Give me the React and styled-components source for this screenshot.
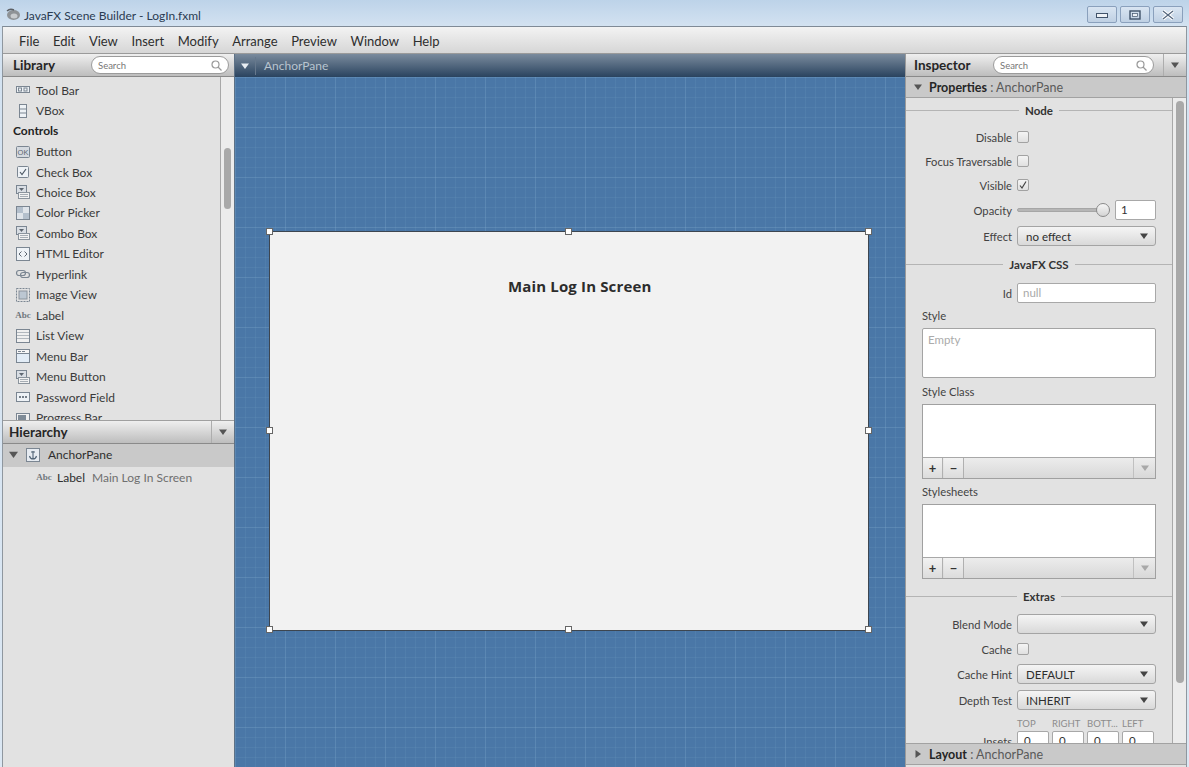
import styled, { createGlobalStyle } from "styled-components";

const GlobalStyle = createGlobalStyle`
  html, body {
    margin: 0;
    padding: 0;
    background: #dbe7f3;
    overflow: hidden;
  }
  body {
    font-family: Lato, "Open Sans", sans-serif;
    font-size: 12px;
    color: #333;
  }
`;

// Window chrome
const Page = styled.div`
  width: 1189px;
  height: 767px;
  display: flex;
  flex-direction: column;
  overflow: hidden;
  background: linear-gradient(180deg, #bdd3e9 0, #d3e2f1 26px, #dbe7f3 100%);
`;

const TitleBar = styled.div`
  height: 26px;
  flex: none;
  display: flex;
  align-items: flex-start;
  padding: 6px 6px 0 5px;
  box-sizing: border-box;
`;

const TitleLogo = styled.svg`
  width: 16px;
  height: 14px;
  margin-top: 2px;
  flex: none;
`;

const TitleText = styled.div`
  margin: 1px 0 0 3px;
  font-size: 12px;
  line-height: 18px;
  color: #2a3b52;
  flex: 1;
`;

const WinButton = styled.div`
  width: 30px;
  height: 17px;
  margin-left: 3px;
  box-sizing: border-box;
  border: 1px solid #8aa0bc;
  border-radius: 2px;
  background: linear-gradient(180deg, #d9e5f2, #bfd0e3);
  display: flex;
  align-items: center;
  justify-content: center;
`;

const Frame = styled.div`
  flex: 1;
  min-height: 0;
  margin: 0 2px;
  display: flex;
  flex-direction: column;
  border-top: 1px solid #7f8a96;
  border-left: 1px solid #8f979f;
  border-right: 1px solid #8f979f;
  box-sizing: border-box;
`;

const MenuBar = styled.div`
  height: 27px;
  flex: none;
  display: flex;
  align-items: center;
  gap: 13.6px;
  padding: 1px 0 0 16px;
  box-sizing: border-box;
  background: linear-gradient(180deg, #f3f3f3, #d6d6d6);
  border-bottom: 1px solid #9a9a9a;
`;

const MenuItem = styled.span`
  font-size: 13px;
  color: #2e2e2e;
`;

const Workspace = styled.div`
  flex: 1;
  min-height: 0;
  display: flex;
`;

// Shared panel parts
const PanelHeader = styled.div`
  height: 23px;
  flex: none;
  display: flex;
  align-items: center;
  box-sizing: border-box;
  background: linear-gradient(180deg, #efefef, #bdbdbd);
  border-bottom: 1px solid #8a8a8a;
`;

const PanelTitle = styled.div`
  font-size: 13.5px;
  font-weight: 700;
  color: #262626;
  width: ${(p) => p.$width}px;
  padding-left: ${(p) => p.$indent}px;
  box-sizing: border-box;
  flex: none;
`;

const SearchBox = styled.div`
  width: ${(p) => p.$width}px;
  height: 18px;
  flex: none;
  box-sizing: border-box;
  border: 1px solid #9b9b9b;
  border-radius: 9px;
  background: #fff;
  display: flex;
  align-items: center;
  justify-content: space-between;
  padding: 0 6px;
  font-size: 9.5px;
  color: #777;
`;

const MenuArrowCell = styled.div`
  width: 22px;
  height: 22px;
  margin-left: auto;
  flex: none;
  border-left: 1px solid #adadad;
  display: flex;
  align-items: center;
  justify-content: center;
`;

const ScrollTrack = styled.div`
  flex: none;
  width: ${(p) => p.$width}px;
  background: #ececec;
  border-left: 1px solid #a8a8a8;
  box-sizing: border-box;
  padding: ${(p) => p.$top}px ${(p) => p.$right}px 0 3px;
`;

const ScrollThumb = styled.div`
  height: ${(p) => p.$height}px;
  border-radius: 4px;
  background: #a9a9a9;
`;

// Left column
const LeftColumn = styled.div`
  width: 231px;
  flex: none;
  display: flex;
  flex-direction: column;
  background: #e2e2e2;
`;

const LibraryBody = styled.div`
  height: 344px;
  flex: none;
  display: flex;
  border-bottom: 1px solid #a0a0a0;
  box-sizing: border-box;
`;

const LibraryList = styled.div`
  flex: 1;
  overflow: hidden;
  padding: 3px 0 0 12px;
`;

const LibraryRow = styled.div`
  height: 20.46px;
  display: flex;
  align-items: center;
  gap: 5px;
  font-size: 12px;
  color: #3a3a3a;
`;

const LibraryGroup = styled.div`
  height: 20.46px;
  line-height: 20px;
  margin-left: -2px;
  font-weight: 700;
  font-size: 12px;
  color: #222;
`;

const IconSlot = styled.svg`
  width: 16px;
  height: 16px;
  flex: none;
`;

const HierarchyRoot = styled.div`
  height: 23px;
  display: flex;
  align-items: center;
  gap: 7px;
  padding: 0 0 2px 6px;
  box-sizing: border-box;
  background: #c9c9c9;
  font-size: 12px;
  color: #2e2e2e;
`;

const HierarchyChild = styled.div`
  height: 22px;
  display: flex;
  align-items: center;
  padding: 0 0 2px 33px;
  box-sizing: border-box;
  gap: 5px;
  font-size: 12px;
  color: #2e2e2e;
`;

const Muted = styled.span`
  color: #6f6f6f;
  margin-left: 2px;
`;

const AbcGlyph = styled.span`
  font-family: "Liberation Serif", serif;
  font-size: 9px;
  font-weight: 700;
  color: #70767c;
  width: 16px;
  flex: none;
  text-align: center;
`;

// Centre column
const CenterColumn = styled.div`
  width: 671px;
  flex: none;
  display: flex;
  flex-direction: column;
  border-left: 1px solid #5d7186;
  box-sizing: border-box;
`;

const PathBar = styled.div`
  height: 23px;
  flex: none;
  display: flex;
  align-items: center;
  background: linear-gradient(180deg, #7a8b9d, #2a435f);
  color: #b9c4cf;
  font-size: 12px;
`;

const PathArrow = styled.div`
  width: 20px;
  height: 18px;
  flex: none;
  margin-right: 8px;
  border-right: 1px solid #66788c;
  display: flex;
  align-items: center;
  justify-content: center;
`;

const Canvas = styled.div`
  flex: 1;
  min-height: 0;
  padding: 154px 0 0 34px;
  box-sizing: border-box;
  background-color: #4a77a7;
  background-image:
    linear-gradient(rgba(130, 170, 205, 0.2) 1px, transparent 1px),
    linear-gradient(90deg, rgba(130, 170, 205, 0.2) 1px, transparent 1px),
    linear-gradient(rgba(130, 170, 205, 0.13) 1px, transparent 1px),
    linear-gradient(90deg, rgba(130, 170, 205, 0.13) 1px, transparent 1px);
  background-size: 50px 50px, 50px 50px, 10px 10px, 10px 10px;
`;

const ContentPane = styled.div`
  position: relative;
  width: 600px;
  height: 400px;
  box-sizing: border-box;
  border: 1px solid #3d4650;
  background: #f2f2f2;
  padding: 43px 0 0 238px;
  font-family: "Open Sans", sans-serif;
  font-size: 15px;
  letter-spacing: 0.15px;
  line-height: 22px;
  font-weight: 700;
  color: #2c2c2c;
`;

const Handle = styled.div`
  position: absolute;
  left: ${(p) => p.$x};
  top: ${(p) => p.$y};
  width: 7px;
  height: 7px;
  margin: -4px 0 0 -4px;
  background: #fff;
  border: 1px solid #666;
  box-sizing: border-box;
`;

// Right column
const RightColumn = styled.div`
  flex: 1;
  min-width: 0;
  display: flex;
  flex-direction: column;
  background: #e2e2e2;
  border-left: 1px solid #9a9a9a;
  box-sizing: border-box;
`;

const AccordionBar = styled.div`
  height: ${(p) => (p.$top ? 22 : 21)}px;
  flex: none;
  display: flex;
  align-items: center;
  padding-left: 8px;
  gap: 7px;
  background: #c9c9c9;
  border-bottom: 1px solid #a2a2a2;
  border-top: ${(p) => (p.$top ? "1px solid #a2a2a2" : "none")};
  box-sizing: border-box;
  font-size: 12.5px;
  color: #5a5a5a;
`;

const AccordionName = styled.span`
  font-weight: 700;
  color: #262626;
`;

const FooterStrip = styled.div`
  height: 2px;
  flex: none;
`;

const InspectorBody = styled.div`
  flex: 1;
  min-height: 0;
  display: flex;
  overflow: hidden;
`;

const Form = styled.div`
  width: 266px;
  flex: none;
  overflow: hidden;
`;

const SectionTitle = styled.div`
  height: ${(p) => p.$height}px;
  margin-bottom: ${(p) => p.$after || 0}px;
  display: flex;
  align-items: center;
  gap: 6px;
  font-size: 11.5px;
  font-weight: 700;
  color: #333;
  &::before, &::after {
    content: "";
    flex: 1;
    height: 1px;
    background: #b4b4b4;
  }
`;

const Row = styled.div`
  height: ${(p) => p.$height}px;
  display: flex;
  align-items: center;
`;

const RowLabel = styled.div`
  width: 106px;
  flex: none;
  margin-right: 5px;
  text-align: right;
  font-size: 11.2px;
  color: #424242;
  white-space: nowrap;
`;

const CheckBox = styled.div`
  width: 12px;
  height: 12px;
  box-sizing: border-box;
  border: 1px solid #a2a2a2;
  border-radius: 2px;
  background: linear-gradient(180deg, #f4f4f4, #e0e0e0);
  display: flex;
  align-items: center;
  justify-content: center;
`;

const Slider = styled.div`
  position: relative;
  width: 93px;
  height: 4px;
  margin-right: 5px;
  border-radius: 2px;
  background: #b6b6b6;
  border: 1px solid #a6a6a6;
  box-sizing: border-box;
`;

const SliderKnob = styled.div`
  position: absolute;
  right: -1px;
  top: -6px;
  width: 14px;
  height: 14px;
  border-radius: 50%;
  border: 1px solid #8a8a8a;
  box-sizing: border-box;
  background: linear-gradient(180deg, #f6f6f6, #d4d4d4);
`;

const TextField = styled.div`
  width: ${(p) => p.$width}px;
  height: 20px;
  box-sizing: border-box;
  border: 1px solid #a8a8a8;
  border-radius: 2px;
  background: #fff;
  padding-left: 5px;
  font-size: 11.5px;
  line-height: 18px;
  color: ${(p) => (p.$hint ? "#a8a8a8" : "#333")};
`;

const SelectBox = styled.div`
  width: 139px;
  height: 20px;
  box-sizing: border-box;
  border: 1px solid #a4a4a4;
  border-radius: 3px;
  background: linear-gradient(180deg, #f5f5f5, #d9d9d9);
  padding: 0 7px 0 8px;
  display: flex;
  align-items: center;
  justify-content: space-between;
  font-size: 11.5px;
  color: #2e2e2e;
`;

const FreeLabel = styled.div`
  height: ${(p) => p.$height}px;
  margin-bottom: ${(p) => p.$after || 0}px;
  padding-left: 16px;
  display: flex;
  align-items: center;
  font-size: 11.2px;
  color: #424242;
`;

const TextArea = styled.div`
  width: 234px;
  height: 50px;
  margin-left: 16px;
  box-sizing: border-box;
  border: 1px solid #a4a4a4;
  border-radius: 2px;
  background: #fff;
  padding: 4px 5px;
  font-size: 11.5px;
  color: #ababab;
`;

const ListEditor = styled.div`
  width: 234px;
  height: 75px;
  margin-left: 16px;
  box-sizing: border-box;
  border: 1px solid #a0a0a0;
  display: flex;
  flex-direction: column;
`;

const ListArea = styled.div`
  flex: 1;
  background: #fff;
  border-bottom: 1px solid #a8a8a8;
`;

const ListTools = styled.div`
  height: 20px;
  flex: none;
  display: flex;
  background: linear-gradient(180deg, #ececec, #d8d8d8);
`;

const ToolButton = styled.div`
  width: 20px;
  flex: none;
  margin-right: 1px;
  border-right: 1px solid #b0b0b0;
  box-sizing: border-box;
  background: linear-gradient(180deg, #f2f2f2, #dcdcdc);
  display: flex;
  align-items: center;
  justify-content: center;
  font-size: 13px;
  font-weight: 700;
  line-height: 1;
  color: #333;
`;

const ToolFill = styled.div`
  flex: 1;
`;

const ToolArrow = styled.div`
  width: 21px;
  flex: none;
  border-left: 1px solid #c0c0c0;
  display: flex;
  align-items: center;
  justify-content: center;
`;

const InsetHeads = styled.div`
  height: 15px;
  padding-left: 111px;
  display: flex;
  gap: 3px;
  align-items: center;
`;

const InsetHead = styled.div`
  width: 32px;
  font-size: 9.5px;
  color: #8c8c8c;
  white-space: nowrap;
`;

const InsetBox = styled(TextField)`
  width: 32px;
  margin-right: 3px;
  padding-left: 6px;
`;

const Triangle = ({ dir = "down", color = "#555", size = 8 }) => (
  <svg width={size} height={size} viewBox="0 0 8 8">
    <path d={dir === "down" ? "M0 1.5H8L4 7Z" : "M1.5 0V8L7 4Z"} fill={color} />
  </svg>
);

const SearchIcon = () => (
  <svg width="11" height="11" viewBox="0 0 11 11" fill="none" stroke="#999" strokeWidth="1.2">
    <circle cx="4.5" cy="4.5" r="3.5" />
    <path d="M7 7l3.5 3.5" />
  </svg>
);

const Outline = { fill: "#eef2f6", stroke: "#7b8692", strokeWidth: 1 };

// library icons, drawn on a 16px square
const icons = {
  toolbar: (
    <>
      <rect x="1.5" y="4.5" width="13" height="6" {...Outline} />
      <rect x="3.5" y="6" width="3" height="3" fill="none" stroke="#7b8692" />
      <rect x="9" y="6" width="3" height="3" fill="none" stroke="#7b8692" />
    </>
  ),
  vbox: (
    <>
      <rect x="4.5" y="1.5" width="7" height="13" {...Outline} />
      <path d="M4.5 6h7M4.5 10h7" stroke="#7b8692" />
    </>
  ),
  button: (
    <>
      <rect x="1.5" y="2.5" width="13" height="11" rx="1" fill="#d5dae0" stroke="#7b8692" />
      <text x="8" y="11" textAnchor="middle" fontSize="7.5" fill="#5d6670" fontFamily="Liberation Sans">OK</text>
    </>
  ),
  check: (
    <>
      <rect x="2.5" y="2.5" width="11" height="11" rx="1" {...Outline} />
      <path d="M5 8l2 2.5L11 5" fill="none" stroke="#4f5a66" strokeWidth="1.2" />
    </>
  ),
  choice: (
    <>
      <rect x="1.5" y="1.5" width="10" height="8" fill="#d9dee4" stroke="#7b8692" />
      <path d="M4 4h5L6.5 7Z" fill="#5d6670" />
      <rect x="3.5" y="8.5" width="11" height="6" fill="#f2f2f2" stroke="#8b949d" />
      <path d="M5 10.5h8M5 12.5h8" stroke="#a6adb4" />
    </>
  ),
  color: (
    <>
      <rect x="1.5" y="1.5" width="13" height="13" fill="#dfe4ea" stroke="#7b8692" />
      <rect x="2" y="2" width="6" height="6" fill="#b3bfcc" />
      <rect x="8" y="8" width="6" height="6" fill="#b3bfcc" />
    </>
  ),
  html: (
    <>
      <rect x="1.5" y="1.5" width="13" height="13" {...Outline} />
      <path d="M6.5 5.5L4 8l2.5 2.5M9.5 5.5L12 8l-2.5 2.5" fill="none" stroke="#5d6670" />
    </>
  ),
  link: (
    <>
      <rect x="1.5" y="4.5" width="9" height="5" rx="2.5" fill="none" stroke="#7b8692" strokeWidth="1.2" />
      <rect x="5.5" y="6.5" width="9" height="5" rx="2.5" fill="none" stroke="#7b8692" strokeWidth="1.2" />
    </>
  ),
  image: (
    <>
      <rect x="1.5" y="1.5" width="13" height="13" fill="none" stroke="#7b8692" strokeDasharray="2 1" />
      <rect x="4" y="4" width="8" height="8" fill="#bcc7d2" stroke="#8b949d" />
    </>
  ),
  list: (
    <>
      <rect x="1.5" y="1.5" width="13" height="13" fill="#f0f0f0" stroke="#7b8692" />
      <path d="M2 4.5h12M2 7.5h12M2 10.5h12" stroke="#b2b8be" />
    </>
  ),
  menubar: (
    <>
      <rect x="1.5" y="1.5" width="13" height="13" fill="#e2ecf6" stroke="#7b8692" />
      <rect x="2" y="2" width="12" height="3" fill="#f6f6f6" />
      <path d="M2 5.5h12" stroke="#7b8692" />
      <path d="M3 3.5h3M7 3.5h3" stroke="#7b8692" />
    </>
  ),
  password: (
    <>
      <rect x="1.5" y="3.5" width="13" height="9" {...Outline} />
      <path d="M4 8h2M7 8h2M10 8h2" stroke="#4f5a66" strokeWidth="1.4" />
    </>
  ),
  progress: (
    <>
      <rect x="1.5" y="4.5" width="13" height="8" fill="#f0f0f0" stroke="#7b8692" />
      <rect x="3" y="6" width="8" height="5" fill="#7f8b97" />
    </>
  ),
  anchor: (
    <>
      <rect x="1.5" y="1.5" width="13" height="13" fill="#e6ebf1" stroke="#7b8692" />
      <path d="M8 4v8M6 5h4M4.5 9c.5 2 2 3 3.5 3s3-1 3.5-3" fill="none" stroke="#4f6275" strokeWidth="1.1" />
    </>
  ),
};

const Icon = ({ name }) => <IconSlot viewBox="0 0 16 16">{icons[name]}</IconSlot>;

const libraryTop = [
  ["toolbar", "Tool Bar"],
  ["vbox", "VBox"],
];

const libraryControls = [
  ["button", "Button"],
  ["check", "Check Box"],
  ["choice", "Choice Box"],
  ["color", "Color Picker"],
  ["choice", "Combo Box"],
  ["html", "HTML Editor"],
  ["link", "Hyperlink"],
  ["image", "Image View"],
  ["abc", "Label"],
  ["list", "List View"],
  ["menubar", "Menu Bar"],
  ["choice", "Menu Button"],
  ["password", "Password Field"],
  ["progress", "Progress Bar"],
];

const menus = ["File", "Edit", "View", "Insert", "Modify", "Arrange", "Preview", "Window", "Help"];

const rightEdge = "calc(100% + 1px)";

const handles = [
  ["0", "0"], ["50%", "0"], [rightEdge, "0"],
  ["0", "50%"], [rightEdge, "50%"],
  ["0", "100%"], ["50%", "100%"], [rightEdge, "100%"],
];

const LibraryItem = ({ icon, label }) => (
  <LibraryRow>
    {icon === "abc" ? <AbcGlyph>Abc</AbcGlyph> : <Icon name={icon} />}
    {label}
  </LibraryRow>
);

const ListBlock = () => (
  <ListEditor>
    <ListArea />
    <ListTools>
      <ToolButton>+</ToolButton>
      <ToolButton>−</ToolButton>
      <ToolFill />
      <ToolArrow>
        <Triangle color="#a8a8a8" />
      </ToolArrow>
    </ListTools>
  </ListEditor>
);

const Select = ({ value }) => (
  <SelectBox>
    <span>{value}</span>
    <Triangle color="#444" />
  </SelectBox>
);

const Check = ({ checked }) => (
  <CheckBox>
    {checked && (
      <svg width="10" height="10" viewBox="0 0 10 10">
        <path d="M2 5.5l2 2.5L8 1.5" fill="none" stroke="#444" strokeWidth="1.2" />
      </svg>
    )}
  </CheckBox>
);

export default function App() {
  return (
    <Page>
      <GlobalStyle />
      <TitleBar>
        <TitleLogo viewBox="0 0 16 14">
          <ellipse cx="8.5" cy="7" rx="6.5" ry="5" fill="#8e9296" />
          <path d="M2 3c2-2 5-2 7-1" fill="none" stroke="#5d6166" strokeWidth="1.4" />
          <ellipse cx="9" cy="8" rx="3.5" ry="2.5" fill="#c8cbce" />
        </TitleLogo>
        <TitleText>JavaFX Scene Builder - LogIn.fxml</TitleText>
        <WinButton>
          <svg width="14" height="8" viewBox="0 0 14 8">
            <rect x="1.5" y="2.5" width="11" height="4" fill="#eef2f6" stroke="#41536a" />
          </svg>
        </WinButton>
        <WinButton>
          <svg width="12" height="10" viewBox="0 0 12 10">
            <rect x="1" y="1" width="10" height="8" fill="none" stroke="#41536a" strokeWidth="1.4" />
            <rect x="3.5" y="3.5" width="5" height="3" fill="#eef2f6" stroke="#41536a" strokeWidth=".7" />
          </svg>
        </WinButton>
        <WinButton>
          <svg width="14" height="10" viewBox="0 0 14 10">
            <path d="M2 1l10 8M12 1L2 9" stroke="#fff" strokeWidth="3.4" />
            <path d="M2 1l10 8M12 1L2 9" stroke="#53657c" strokeWidth="1.2" />
          </svg>
        </WinButton>
      </TitleBar>

      <Frame>
        <MenuBar>
          {menus.map((m) => (
            <MenuItem key={m}>{m}</MenuItem>
          ))}
        </MenuBar>

        <Workspace>
          <LeftColumn>
            <PanelHeader>
              <PanelTitle $width={88} $indent={10}>Library</PanelTitle>
              <SearchBox $width={138}>
                Search
                <SearchIcon />
              </SearchBox>
            </PanelHeader>
            <LibraryBody>
              <LibraryList>
                {libraryTop.map(([icon, label]) => (
                  <LibraryItem key={label} icon={icon} label={label} />
                ))}
                <LibraryGroup>Controls</LibraryGroup>
                {libraryControls.map(([icon, label]) => (
                  <LibraryItem key={label} icon={icon} label={label} />
                ))}
              </LibraryList>
              <ScrollTrack $width={14} $top={71} $right={3}>
                <ScrollThumb $height={61} />
              </ScrollTrack>
            </LibraryBody>
            <PanelHeader>
              <PanelTitle $width={200} $indent={6}>Hierarchy</PanelTitle>
              <MenuArrowCell>
                <Triangle />
              </MenuArrowCell>
            </PanelHeader>
            <HierarchyRoot>
              <Triangle size={9} />
              <Icon name="anchor" />
              AnchorPane
            </HierarchyRoot>
            <HierarchyChild>
              <AbcGlyph>Abc</AbcGlyph>
              Label
              <Muted>Main Log In Screen</Muted>
            </HierarchyChild>
          </LeftColumn>

          <CenterColumn>
            <PathBar>
              <PathArrow>
                <Triangle color="#e8edf2" />
              </PathArrow>
              AnchorPane
            </PathBar>
            <Canvas>
              <ContentPane>
                Main Log In Screen
                {handles.map(([x, y]) => (
                  <Handle key={x + y} $x={x} $y={y} />
                ))}
              </ContentPane>
            </Canvas>
          </CenterColumn>

          <RightColumn>
            <PanelHeader>
              <PanelTitle $width={87} $indent={8}>Inspector</PanelTitle>
              <SearchBox $width={161}>
                Search
                <SearchIcon />
              </SearchBox>
              <MenuArrowCell>
                <Triangle />
              </MenuArrowCell>
            </PanelHeader>
            <AccordionBar>
              <Triangle />
              <span>
                <AccordionName>Properties</AccordionName> : AnchorPane
              </span>
            </AccordionBar>
            <InspectorBody>
              <Form>
                <SectionTitle $height={24} $after={3}>Node</SectionTitle>
                <Row $height={24}>
                  <RowLabel>Disable</RowLabel>
                  <Check />
                </Row>
                <Row $height={24}>
                  <RowLabel>Focus Traversable</RowLabel>
                  <Check />
                </Row>
                <Row $height={24}>
                  <RowLabel>Visible</RowLabel>
                  <Check checked />
                </Row>
                <Row $height={26}>
                  <RowLabel>Opacity</RowLabel>
                  <Slider>
                    <SliderKnob />
                  </Slider>
                  <TextField $width={41}>1</TextField>
                </Row>
                <Row $height={26}>
                  <RowLabel>Effect</RowLabel>
                  <Select value="no effect" />
                </Row>
                <SectionTitle $height={30} $after={1}>JavaFX CSS</SectionTitle>
                <Row $height={26}>
                  <RowLabel>Id</RowLabel>
                  <TextField $width={139} $hint>null</TextField>
                </Row>
                <FreeLabel $height={18} $after={4}>Style</FreeLabel>
                <TextArea>Empty</TextArea>
                <FreeLabel $height={26}>Style Class</FreeLabel>
                <ListBlock />
                <FreeLabel $height={25}>Stylesheets</FreeLabel>
                <ListBlock />
                <SectionTitle $height={34} $after={1}>Extras</SectionTitle>
                <Row $height={20}>
                  <RowLabel>Blend Mode</RowLabel>
                  <Select value="" />
                </Row>
                <Row $height={30}>
                  <RowLabel>Cache</RowLabel>
                  <Check />
                </Row>
                <Row $height={20}>
                  <RowLabel>Cache Hint</RowLabel>
                  <Select value="DEFAULT" />
                </Row>
                <Row $height={32}>
                  <RowLabel>Depth Test</RowLabel>
                  <Select value="INHERIT" />
                </Row>
                <InsetHeads>
                  <InsetHead>TOP</InsetHead>
                  <InsetHead>RIGHT</InsetHead>
                  <InsetHead>BOTT...</InsetHead>
                  <InsetHead>LEFT</InsetHead>
                </InsetHeads>
                <Row $height={20}>
                  <RowLabel>Insets</RowLabel>
                  <InsetBox>0</InsetBox>
                  <InsetBox>0</InsetBox>
                  <InsetBox>0</InsetBox>
                  <InsetBox>0</InsetBox>
                </Row>
              </Form>
              <ScrollTrack $width={15} $top={3} $right={3}>
                <ScrollThumb $height={582} />
              </ScrollTrack>
            </InspectorBody>
            <AccordionBar $top>
              <Triangle dir="right" />
              <span>
                <AccordionName>Layout</AccordionName> : AnchorPane
              </span>
            </AccordionBar>
            <FooterStrip />
          </RightColumn>
        </Workspace>
      </Frame>
    </Page>
  );
}
